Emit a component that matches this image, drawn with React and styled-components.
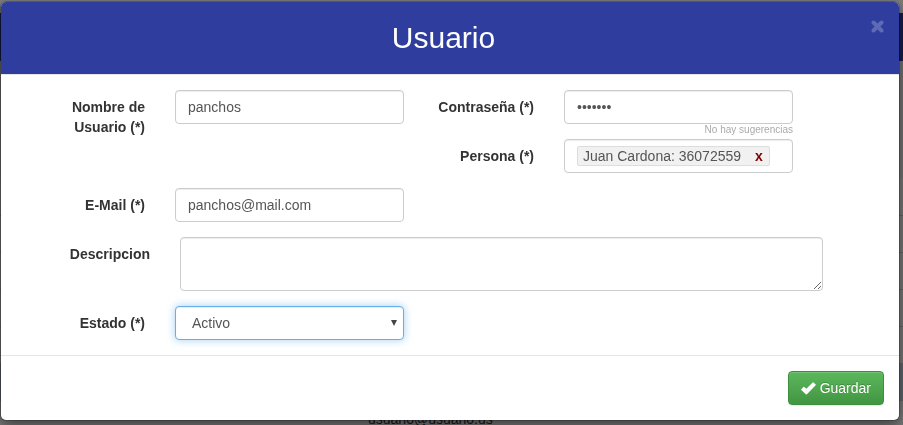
import React from "react";
import styled, { createGlobalStyle, css } from "styled-components";

const GlobalStyle = createGlobalStyle`
  *, *::before, *::after { box-sizing: border-box; }
  html, body { height: 100%; }
  body {
    margin: 0;
    overflow: hidden;
    background: #fff;
    color: #333;
    font-family: "Liberation Sans", Arial, sans-serif;
    font-size: 14px;
    line-height: 20px;
  }
`;

/* ---------- page behind the dialog ---------- */

const Page = styled.div`
  padding-top: 13px;
`;

const NavBar = styled.nav`
  height: 48px;
  background: #2f3d9e;
`;

const Toolbar = styled.div`
  height: 118px;
  background: #eee;
`;

const List = styled.ul`
  margin: 0;
  padding: 0;
  list-style: none;
`;

const ListRow = styled.li`
  height: 37px;
  border-bottom: 1px solid #ccc;
  background: ${(p) => (p.$active ? "#c4d4e0" : "#f9f9f9")};
`;

const LastRow = styled.li`
  display: grid;
  grid-template-columns: 368fr 535fr;
  padding-top: 8px;
  background: #f9f9f9;
`;

const Backdrop = styled.div`
  position: fixed;
  inset: 0;
  background: rgba(0, 0, 0, 0.5);
`;

/* ---------- dialog ---------- */

const Dialog = styled.div`
  position: absolute;
  top: 1px;
  left: 0;
  right: 3px;
  border: 1px solid rgba(0, 0, 0, 0.2);
  border-radius: 6px;
  background: #fff;
  background-clip: padding-box;
  box-shadow: 0 5px 15px rgba(0, 0, 0, 0.5);
`;

const Header = styled.header`
  display: flex;
  align-items: flex-start;
  padding: 15px;
  border-bottom: 1px solid #e5e5e5;
  border-radius: 5px 5px 0 0;
  background: #2f3d9e;
`;

const Title = styled.h1`
  flex: 1;
  margin: 0;
  color: #fff;
  font-size: 30px;
  font-weight: 400;
  line-height: 42px;
  text-align: center;
`;

const CloseButton = styled.button`
  display: block;
  padding: 3px 0;
  border: 0;
  background: none;
  color: #fff;
  line-height: 0;
  opacity: 0.23;
`;

const Form = styled.form`
  margin: 0;
`;

const Body = styled.div`
  padding-top: 15px;
`;

const FieldGrid = styled.div`
  display: grid;
  grid-template-columns: 100fr 229fr 100fr 229fr;
  column-gap: 30px;
  align-items: start;
  padding: 0 106px 0 44px;
`;

const WideGrid = styled(FieldGrid)`
  grid-template-columns: 105fr 643fr;
  padding-right: 76px;
`;

const Label = styled.label`
  grid-column-start: ${(p) => p.$column || "auto"};
  padding-top: 7px;
  font-weight: 700;
  text-align: right;
`;

const Cell = styled.div`
  min-width: 0;
  padding-bottom: ${(p) => (p.$hinted ? 0 : 15)}px;
`;

const control = css`
  display: block;
  width: 100%;
  height: 34px;
  margin: 0;
  padding: 6px 12px;
  border: 1px solid #ccc;
  border-radius: 4px;
  outline: 0;
  background: #fff;
  box-shadow: inset 0 1px 1px rgba(0, 0, 0, 0.075);
  color: #555;
  font: inherit;
`;

const Input = styled.input`
  ${control}
`;

const TextArea = styled.textarea`
  ${control}
  height: 54px;
  resize: vertical;
`;

const Hint = styled.div`
  height: 15px;
  color: #aaa;
  font-size: 10px;
  line-height: 12px;
  text-align: right;
`;

const TagBox = styled.div`
  ${control}
`;

const Tag = styled.span`
  display: inline-flex;
  gap: 14px;
  height: 20px;
  padding: 0 6px 0 5px;
  border: 1px solid #ddd;
  border-radius: 2px;
  background: #f1f1f1;
  line-height: 18px;
  white-space: nowrap;
`;

const TagRemove = styled.button`
  padding: 0;
  border: 0;
  background: none;
  color: #800000;
  font: inherit;
  font-weight: 700;
`;

const SelectWrap = styled.div`
  position: relative;
`;

const Select = styled.select`
  ${control}
  padding-left: 16px;
  border-color: #66afe9;
  box-shadow: inset 0 1px 1px rgba(0, 0, 0, 0.075),
    0 0 8px rgba(102, 175, 233, 0.6);
  appearance: none;
`;

const Arrow = styled.svg`
  position: absolute;
  top: 14px;
  right: 7px;
  pointer-events: none;
`;

const Footer = styled.footer`
  display: flex;
  justify-content: flex-end;
  padding: 15px;
  border-top: 1px solid #e5e5e5;
`;

const SaveButton = styled.button`
  display: flex;
  align-items: center;
  gap: 4px;
  height: 34px;
  padding: 6px 12px;
  border: 1px solid #3e8f3e;
  border-radius: 4px;
  background: linear-gradient(#5cb85c, #419641);
  box-shadow: inset 0 1px 0 rgba(255, 255, 255, 0.15),
    0 1px 1px rgba(0, 0, 0, 0.075);
  color: #fff;
  font: inherit;
  text-shadow: 0 -1px 0 rgba(0, 0, 0, 0.2);
`;

const rows = [false, false, false, false, false, true];

export default function App() {
  return (
    <>
      <GlobalStyle />
      <Page aria-hidden="true">
        <NavBar />
        <Toolbar />
        <List>
          {rows.map((active, i) => (
            <ListRow key={i} $active={active} />
          ))}
          <LastRow>
            <span />
            <span>usuario@usuario.us</span>
          </LastRow>
        </List>
      </Page>
      <Backdrop />
      <Dialog role="dialog" aria-modal="true" aria-labelledby="dialog-title">
        <Header>
          <Title id="dialog-title">Usuario</Title>
          <CloseButton type="button" aria-label="Cerrar">
            <svg width="13" height="13" viewBox="0 0 13 13">
              <path
                d="M2.5 2.5 10.5 10.5M10.5 2.5 2.5 10.5"
                fill="none"
                stroke="currentColor"
                strokeWidth="4"
                strokeLinecap="round"
              />
            </svg>
          </CloseButton>
        </Header>
        <Form onSubmit={(e) => e.preventDefault()}>
          <Body>
            <FieldGrid>
              <Label htmlFor="username">Nombre de Usuario (*)</Label>
              <Cell>
                <Input id="username" defaultValue="panchos" />
              </Cell>
              <Label htmlFor="password">Contraseña (*)</Label>
              <Cell $hinted>
                <Input id="password" type="password" defaultValue="panchos" />
                <Hint>No hay sugerencias</Hint>
              </Cell>
              <Label as="span" id="person-label" $column={3}>
                Persona (*)
              </Label>
              <Cell>
                <TagBox role="group" aria-labelledby="person-label">
                  <Tag>
                    Juan Cardona: 36072559
                    <TagRemove type="button" aria-label="Quitar Juan Cardona">
                      x
                    </TagRemove>
                  </Tag>
                </TagBox>
              </Cell>
              <Label htmlFor="email" $column={1}>
                E-Mail (*)
              </Label>
              <Cell>
                <Input id="email" type="email" defaultValue="panchos@mail.com" />
              </Cell>
            </FieldGrid>
            <WideGrid>
              <Label htmlFor="description">Descripcion</Label>
              <Cell>
                <TextArea id="description" />
              </Cell>
            </WideGrid>
            <FieldGrid>
              <Label htmlFor="status">Estado (*)</Label>
              <Cell>
                <SelectWrap>
                  <Select id="status" defaultValue="Activo">
                    <option>Activo</option>
                    <option>Inactivo</option>
                  </Select>
                  <Arrow width="6" height="6" viewBox="0 0 6 6" aria-hidden="true">
                    <path d="M0 0H6L3 6Z" fill="#444" />
                  </Arrow>
                </SelectWrap>
              </Cell>
            </FieldGrid>
          </Body>
          <Footer>
            <SaveButton type="submit">
              <svg width="15" height="13" viewBox="0 0 14 12" aria-hidden="true">
                <path
                  d="M.3 6.6 2.3 4.5Q2.7 4.1 3.1 4.5L5 6.3 10.9.4Q11.3 0 11.7.4L13.7 2.2Q14.1 2.6 13.7 3L5.5 11.4Q5 11.9 4.5 11.4L.3 7.4Q-.1 7 .3 6.6Z"
                  fill="currentColor"
                />
              </svg>
              Guardar
            </SaveButton>
          </Footer>
        </Form>
      </Dialog>
    </>
  );
}
